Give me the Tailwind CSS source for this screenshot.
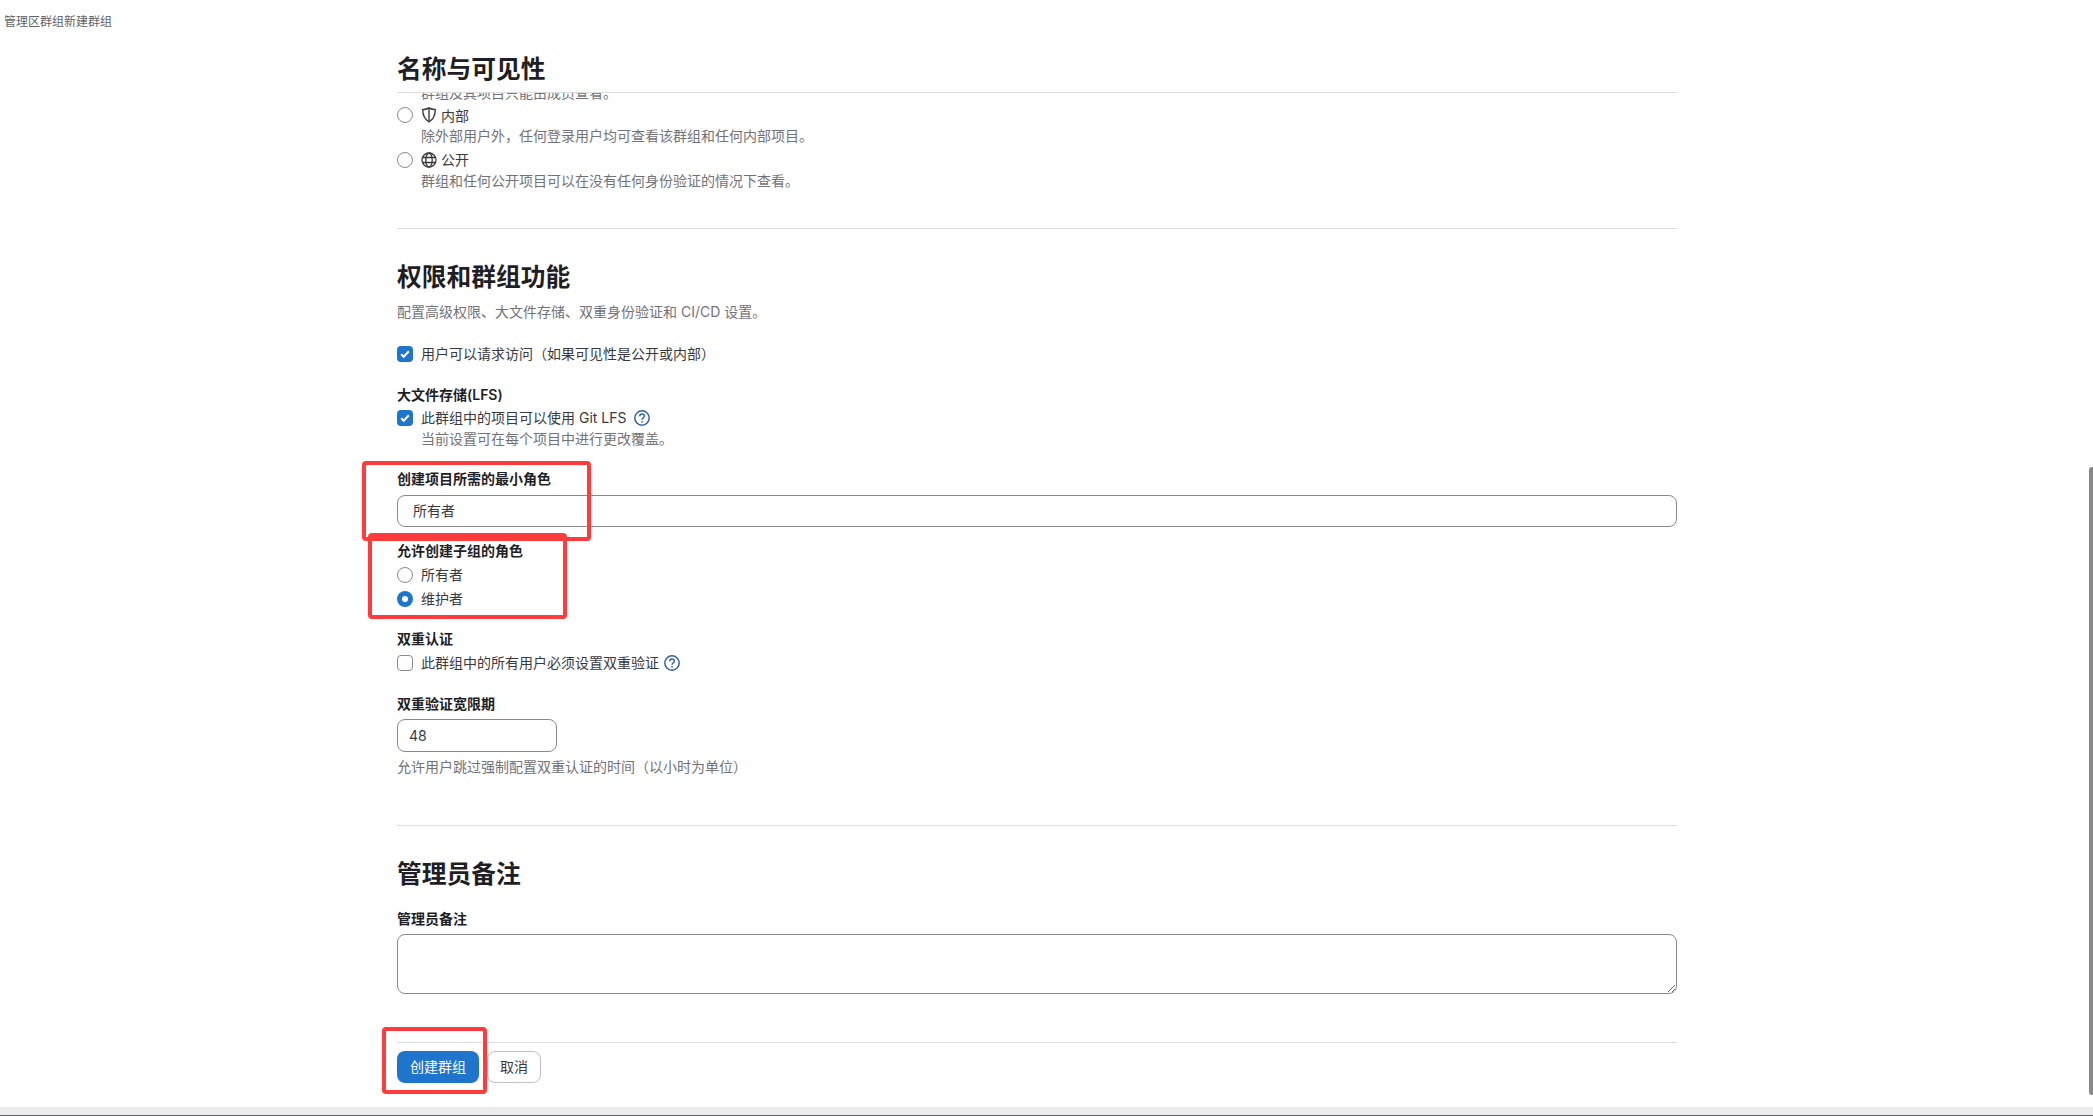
<!DOCTYPE html>
<html lang="zh-CN">
<head>
    <meta charset="UTF-8">
    <meta name="viewport" content="width=device-width, initial-scale=1.0">
    <title>新建群组</title>
    <script src="https://cdn.jsdelivr.net/npm/@tailwindcss/browser@4"></script>
</head>
<body class="relative h-[1116px] overflow-hidden bg-white text-sm leading-5 text-[#3a383f] font-['Inter','Noto_Sans_CJK_SC',sans-serif]">

    <!-- 面包屑 -->
    <div class="h-[44px] pl-[4px] pt-[12px] text-xs leading-5 text-[#626168]">管理区群组新建群组</div>

    <div class="ml-[397px] w-[1280px]">
        <!-- 名称与可见性 -->
        <div class="h-[49px] border-b border-[#dcdcde] pt-[9px]">
            <h2 class="text-[24.75px] leading-8 font-bold text-[#1f1e24]">名称与可见性</h2>
        </div>
        <div class="h-[136px] overflow-hidden border-b border-[#dcdcde]">
            <p class="-mt-[10px] pl-[24px] text-[#737278]">群组及其项目只能由成员查看。</p>
            <label class="mt-[2px] flex h-5 items-center">
                <span class="h-4 w-4 rounded-full border border-[#89888d]"></span>
                <svg class="ml-[8px] h-4 w-4 text-[#3a383f]" viewBox="0 0 16 16" fill="none" stroke="currentColor" stroke-width="1.400">
                    <path d="M8 1c2.200 1 4.200 1.500 6.300 1.600 0 5.400-1.900 9.800-6.300 12.400-4.400-2.600-6.300-7-6.300-12.400C3.800 2.500 5.800 2 8 1z"/>
                    <path d="M8 1.500v13" />
                </svg>
                <span class="ml-[4px] translate-y-[1px]">内部</span>
            </label>
            <p class="mt-[1px] pl-[24px] text-[#737278]">除外部用户外，任何登录用户均可查看该群组和任何内部项目。</p>
            <label class="mt-[4px] flex h-5 items-center">
                <span class="h-4 w-4 rounded-full border border-[#89888d]"></span>
                <svg class="ml-[8px] h-4 w-4 text-[#3a383f]" viewBox="0 0 16 16" fill="none" stroke="currentColor" stroke-width="1.300">
                    <circle cx="8" cy="8" r="7"/>
                    <ellipse cx="8" cy="8" rx="3.200" ry="7"/>
                    <path d="M1.500 5.500h13M1.500 10.500h13"/>
                </svg>
                <span class="ml-[4px]">公开</span>
            </label>
            <p class="mt-[1px] pl-[24px] text-[#737278]">群组和任何公开项目可以在没有任何身份验证的情况下查看。</p>
        </div>

        <!-- 权限和群组功能 -->
        <h2 class="mt-[32px] text-[24.75px] leading-8 font-bold text-[#1f1e24]">权限和群组功能</h2>
        <p class="mt-[9px] text-[#737278]">配置高级权限、大文件存储、双重身份验证和 CI/CD 设置。</p>

        <label class="mt-[22px] flex h-5 items-center">
            <span class="flex h-4 w-4 items-center justify-center rounded-[4px] bg-[#1f75cb]">
                <svg class="h-3 w-3" viewBox="0 0 12 12" fill="none" stroke="white" stroke-width="2"><path d="M2.200 6.200l2.600 2.500 5-5.400"/></svg>
            </span>
            <span class="ml-[8px]">用户可以请求访问（如果可见性是公开或内部）</span>
        </label>

        <div class="mt-[21px] font-semibold text-[#1f1e24]">大文件存储(LFS)</div>
        <label class="mt-[3px] flex h-5 items-center">
            <span class="flex h-4 w-4 items-center justify-center rounded-[4px] bg-[#1f75cb]">
                <svg class="h-3 w-3" viewBox="0 0 12 12" fill="none" stroke="white" stroke-width="2"><path d="M2.200 6.200l2.600 2.500 5-5.400"/></svg>
            </span>
            <span class="ml-[8px]">此群组中的项目可以使用 Git LFS</span>
            <svg class="ml-[8px] h-4 w-4 text-[#2f62a8]" viewBox="0 0 16 16" fill="none" stroke="currentColor" stroke-width="1.500">
                <circle cx="8" cy="8" r="7.200"/>
                <path d="M5.700 6.200c0-1.300 1-2.200 2.300-2.200s2.300.9 2.300 2.100c0 1.900-2.300 1.900-2.300 3.700"/>
                <circle cx="8" cy="11.800" r=".9" fill="currentColor" stroke="none"/>
            </svg>
        </label>
        <p class="mt-[1px] pl-[24px] text-[#737278]">当前设置可在每个项目中进行更改覆盖。</p>

        <div class="mt-[20px] font-semibold text-[#1f1e24]">创建项目所需的最小角色</div>
        <input type="text" value="所有者" class="mt-[6px] block h-[32px] w-full rounded-lg border border-[#89888d] px-[15px] pb-[2px] text-sm text-[#3a383f]">

        <div class="mt-[14px] font-semibold text-[#1f1e24]">允许创建子组的角色</div>
        <label class="mt-[4px] flex h-5 items-center">
            <span class="h-4 w-4 rounded-full border border-[#89888d]"></span>
            <span class="ml-[8px]">所有者</span>
        </label>
        <label class="mt-[4px] flex h-5 items-center">
            <span class="flex h-4 w-4 items-center justify-center rounded-full bg-[#1f75cb]">
                <span class="h-[6px] w-[6px] rounded-full bg-white"></span>
            </span>
            <span class="ml-[8px]">维护者</span>
        </label>

        <div class="mt-[20px] font-semibold text-[#1f1e24]">双重认证</div>
        <label class="mt-[4px] flex h-5 items-center">
            <span class="h-4 w-4 rounded-[4px] border border-[#89888d]"></span>
            <span class="ml-[8px]">此群组中的所有用户必须设置双重验证</span>
            <svg class="ml-[5px] h-4 w-4 text-[#2f62a8]" viewBox="0 0 16 16" fill="none" stroke="currentColor" stroke-width="1.500">
                <circle cx="8" cy="8" r="7.200"/>
                <path d="M5.700 6.200c0-1.300 1-2.200 2.300-2.200s2.300.9 2.300 2.100c0 1.900-2.300 1.900-2.300 3.700"/>
                <circle cx="8" cy="11.800" r=".9" fill="currentColor" stroke="none"/>
            </svg>
        </label>

        <div class="mt-[21px] font-semibold text-[#1f1e24]">双重验证宽限期</div>
        <input type="text" value="48" class="mt-[5px] block h-[33px] w-[160px] rounded-lg border border-[#89888d] px-[11px] text-sm text-[#3a383f]">
        <p class="mt-[5px] text-[#737278]">允许用户跳过强制配置双重认证的时间（以小时为单位）</p>

        <!-- 管理员备注 -->
        <div class="mt-[48px] border-t border-[#dcdcde] pt-[32px]">
            <h2 class="text-[24.75px] leading-8 font-bold text-[#1f1e24]">管理员备注</h2>
        </div>
        <div class="mt-[19px] font-semibold text-[#1f1e24]">管理员备注</div>
        <textarea class="mt-[5px] block h-[60px] w-full rounded-lg border border-[#89888d]"></textarea>

        <div class="mt-[48px] flex gap-[8px] border-t border-[#dcdcde] pt-[8px]">
            <button class="h-[32px] w-[82px] rounded-lg bg-[#1f75cb] text-sm text-white">创建群组</button>
            <button class="h-[32px] w-[54px] rounded-lg border border-[#bfbfc3] text-sm text-[#3a383f]">取消</button>
        </div>
    </div>

    <!-- 标注框 -->
    <div class="absolute left-[362px] top-[461px] h-[80px] w-[229px] rounded-[4px] border-4 border-[#ff3b3b]"></div>
    <div class="absolute left-[368px] top-[533px] h-[86px] w-[199px] rounded-[4px] border-4 border-[#ff3b3b]"></div>
    <div class="absolute left-[382px] top-[1027px] h-[67px] w-[105px] rounded-[4px] border-4 border-[#ff3b3b]"></div>

    <!-- 滚动条 -->
    <div class="absolute right-0 top-[467px] h-[628px] w-[4px] rounded-tl-[3px] rounded-bl-[3px] bg-[#89888d]"></div>

    <!-- 底部栏 -->
    <div class="absolute bottom-0 left-0 h-[9px] w-full border-b border-[#626168] bg-[#ececef]"></div>
</body>
</html>
